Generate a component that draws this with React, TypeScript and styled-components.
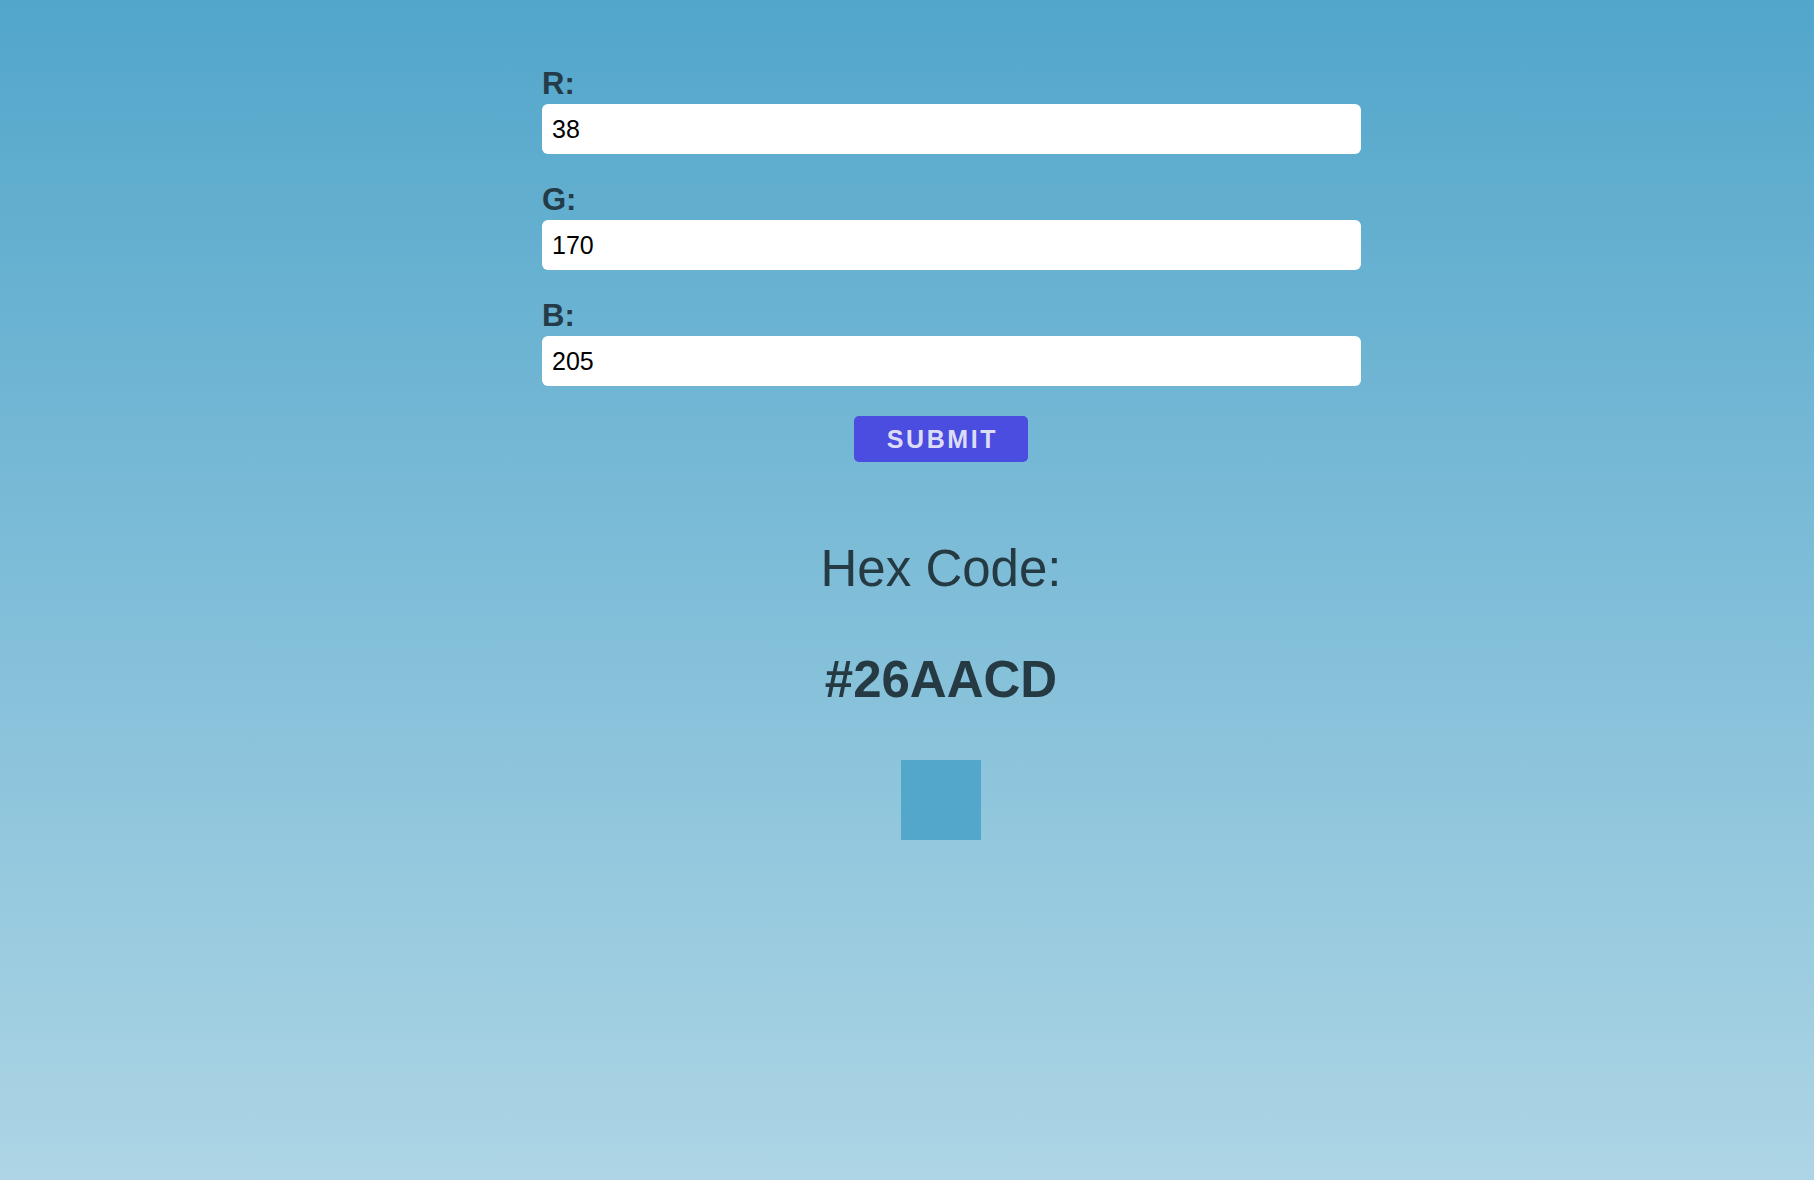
import React, { useState } from "react";
import styled, { createGlobalStyle } from "styled-components";

const GlobalStyle = createGlobalStyle`
  html, body {
    margin: 0;
    padding: 0;
  }
  body {
    font-family: "Liberation Sans", Arial, sans-serif;
    min-height: 1180px;
    background: linear-gradient(to bottom, #52a6cb 0%, #add5e5 100%);
    background-attachment: fixed;
  }
`;

const Page = styled.div`
  min-height: 1180px;
  padding: 67px 0 0 68px;
  box-sizing: border-box;
`;

const Column = styled.div`
  width: 798px;
  margin: 0 auto;
  display: flex;
  flex-direction: column;
  align-items: center;
`;

const Form = styled.form`
  width: 100%;
  display: flex;
  flex-direction: column;
  align-items: center;
`;

const Field = styled.div`
  width: 100%;
  display: flex;
  flex-direction: column;
  margin-bottom: 29px;
`;

const Label = styled.label`
  font-size: 31px;
  line-height: 34px;
  font-weight: 700;
  color: #233c48;
  margin-bottom: 3px;
`;

const Input = styled.input`
  width: 100%;
  box-sizing: content-box;
  height: 50px;
  padding: 0 11px 0 10px;
  margin: 0;
  border: none;
  border-radius: 6px;
  background: #ffffff;
  font-family: "Liberation Sans", Arial, sans-serif;
  font-size: 25px;
  color: #000000;
  outline: none;
`;

const SubmitButton = styled.button`
  width: 174px;
  height: 46px;
  margin-top: 1px;
  border: none;
  border-radius: 5px;
  background: #4a4ddf;
  color: #dcdcf7;
  font-family: "Liberation Sans", Arial, sans-serif;
  font-size: 25px;
  font-weight: 700;
  letter-spacing: 2.6px;
  padding: 0 0 0 3px;
  cursor: pointer;
`;

const HexTitle = styled.h2`
  margin: 78px 0 0;
  font-size: 51px;
  line-height: 58px;
  font-weight: 400;
  color: #263a44;
`;

const HexValue = styled.h2`
  margin: 53px 0 0;
  font-size: 51px;
  line-height: 58px;
  font-weight: 700;
  color: #263a44;
`;

const Swatch = styled.div<{ $color: string }>`
  width: 80px;
  height: 80px;
  margin-top: 51px;
  background: ${(p) => p.$color};
`;

export default function App() {
  const [r, setR] = useState("38");
  const [g, setG] = useState("170");
  const [b, setB] = useState("205");

  return (
    <>
      <GlobalStyle />
      <Page>
        <Column>
          <Form onSubmit={(e) => e.preventDefault()}>
            <Field>
              <Label htmlFor="r">R:</Label>
              <Input id="r" value={r} onChange={(e) => setR(e.target.value)} />
            </Field>
            <Field>
              <Label htmlFor="g">G:</Label>
              <Input id="g" value={g} onChange={(e) => setG(e.target.value)} />
            </Field>
            <Field>
              <Label htmlFor="b">B:</Label>
              <Input id="b" value={b} onChange={(e) => setB(e.target.value)} />
            </Field>
            <SubmitButton type="submit">SUBMIT</SubmitButton>
          </Form>
          <HexTitle>Hex Code:</HexTitle>
          <HexValue>#26AACD</HexValue>
          <Swatch $color="#53a7cb" />
        </Column>
      </Page>
    </>
  );
}
